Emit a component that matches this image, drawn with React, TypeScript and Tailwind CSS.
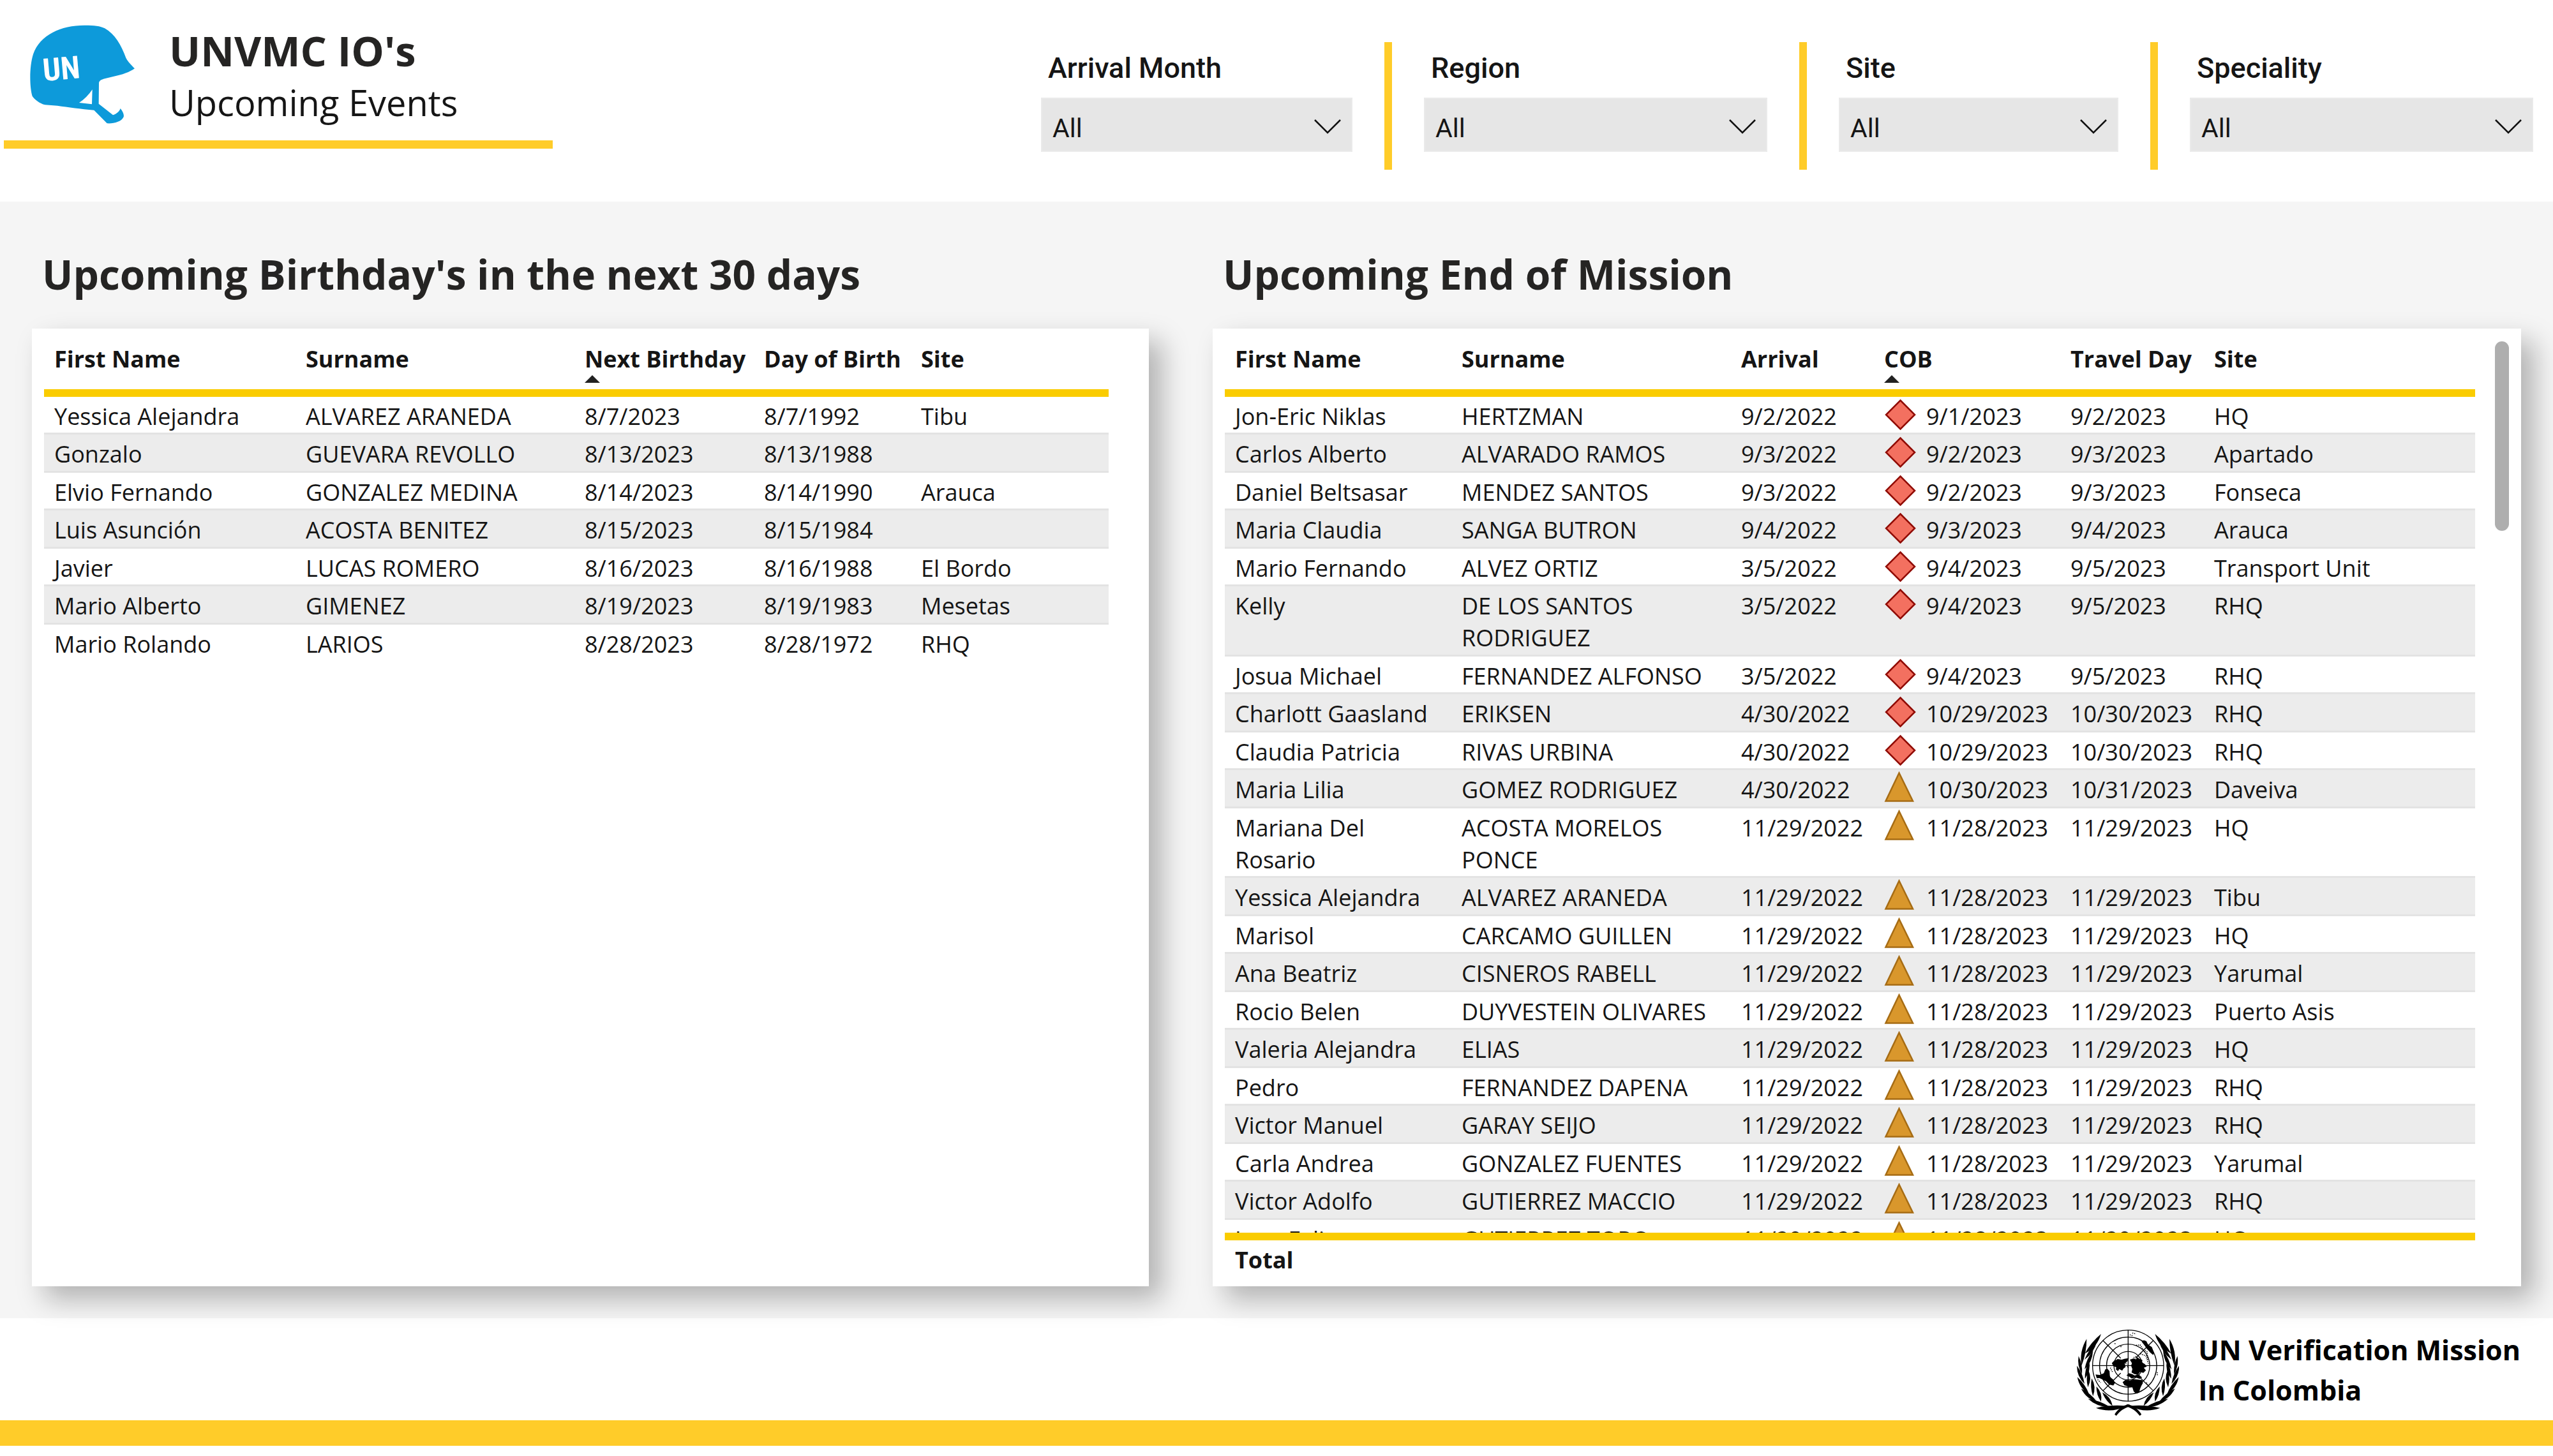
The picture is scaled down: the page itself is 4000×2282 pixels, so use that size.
import { Fragment, ReactNode } from "react";

type Column = {
    label: string;
    width: string;
    sorted?: boolean;
};

type Mission = [string, string, string, string, string, string];

const filters = [
    { id: "arrival-month", label: "Arrival Month" },
    { id: "region", label: "Region" },
    { id: "site", label: "Site" },
    { id: "speciality", label: "Speciality" },
];

const birthdayColumns: Column[] = [
    { label: "First Name", width: "w-[394px]" },
    { label: "Surname", width: "w-[437px]" },
    { label: "Next Birthday", width: "w-[281px]", sorted: true },
    { label: "Day of Birth", width: "w-[246px]" },
    { label: "Site", width: "w-auto" },
];

const birthdays = [
    ["Yessica Alejandra", "ALVAREZ ARANEDA", "8/7/2023", "8/7/1992", "Tibu"],
    ["Gonzalo", "GUEVARA REVOLLO", "8/13/2023", "8/13/1988", ""],
    ["Elvio Fernando", "GONZALEZ MEDINA", "8/14/2023", "8/14/1990", "Arauca"],
    ["Luis Asunción", "ACOSTA BENITEZ", "8/15/2023", "8/15/1984", ""],
    ["Javier", "LUCAS ROMERO", "8/16/2023", "8/16/1988", "El Bordo"],
    ["Mario Alberto", "GIMENEZ", "8/19/2023", "8/19/1983", "Mesetas"],
    ["Mario Rolando", "LARIOS", "8/28/2023", "8/28/1972", "RHQ"],
];

const missionColumns: Column[] = [
    { label: "First Name", width: "w-[355px]" },
    { label: "Surname", width: "w-[438px]" },
    { label: "Arrival", width: "w-[224px]" },
    { label: "COB", width: "w-[292px]", sorted: true },
    { label: "Travel Day", width: "w-[225px]" },
    { label: "Site", width: "w-auto" },
];

const missions: Mission[] = [
    ["Jon-Eric Niklas", "HERTZMAN", "9/2/2022", "9/1/2023", "9/2/2023", "HQ"],
    ["Carlos Alberto", "ALVARADO RAMOS", "9/3/2022", "9/2/2023", "9/3/2023", "Apartado"],
    ["Daniel Beltsasar", "MENDEZ SANTOS", "9/3/2022", "9/2/2023", "9/3/2023", "Fonseca"],
    ["Maria Claudia", "SANGA BUTRON", "9/4/2022", "9/3/2023", "9/4/2023", "Arauca"],
    ["Mario Fernando", "ALVEZ ORTIZ", "3/5/2022", "9/4/2023", "9/5/2023", "Transport Unit"],
    ["Kelly", "DE LOS SANTOS RODRIGUEZ", "3/5/2022", "9/4/2023", "9/5/2023", "RHQ"],
    ["Josua Michael", "FERNANDEZ ALFONSO", "3/5/2022", "9/4/2023", "9/5/2023", "RHQ"],
    ["Charlott Gaasland", "ERIKSEN", "4/30/2022", "10/29/2023", "10/30/2023", "RHQ"],
    ["Claudia Patricia", "RIVAS URBINA", "4/30/2022", "10/29/2023", "10/30/2023", "RHQ"],
    ["Maria Lilia", "GOMEZ RODRIGUEZ", "4/30/2022", "10/30/2023", "10/31/2023", "Daveiva"],
    ["Mariana Del Rosario", "ACOSTA MORELOS PONCE", "11/29/2022", "11/28/2023", "11/29/2023", "HQ"],
    ["Yessica Alejandra", "ALVAREZ ARANEDA", "11/29/2022", "11/28/2023", "11/29/2023", "Tibu"],
    ["Marisol", "CARCAMO GUILLEN", "11/29/2022", "11/28/2023", "11/29/2023", "HQ"],
    ["Ana Beatriz", "CISNEROS RABELL", "11/29/2022", "11/28/2023", "11/29/2023", "Yarumal"],
    ["Rocio Belen", "DUYVESTEIN OLIVARES", "11/29/2022", "11/28/2023", "11/29/2023", "Puerto Asis"],
    ["Valeria Alejandra", "ELIAS", "11/29/2022", "11/28/2023", "11/29/2023", "HQ"],
    ["Pedro", "FERNANDEZ DAPENA", "11/29/2022", "11/28/2023", "11/29/2023", "RHQ"],
    ["Victor Manuel", "GARAY SEIJO", "11/29/2022", "11/28/2023", "11/29/2023", "RHQ"],
    ["Carla Andrea", "GONZALEZ FUENTES", "11/29/2022", "11/28/2023", "11/29/2023", "Yarumal"],
    ["Victor Adolfo", "GUTIERREZ MACCIO", "11/29/2022", "11/28/2023", "11/29/2023", "RHQ"],
    ["Juan Felipe", "GUTIERREZ TORO", "11/29/2022", "11/28/2023", "11/29/2023", "HQ"],
];

// COB dates before this one are shown as urgent
const urgentBefore = new Date("10/30/2023");

/** Blue helmet with chin strap */
function HelmetLogo() {
    return (
        <svg viewBox="48 24 498 468" className="h-[156px] w-[166px] shrink-0" role="img" aria-label="UN helmet">
            <path
                fill="#0d9ada"
                fillRule="evenodd"
                d="M62 362C49 320 47 225 66 165C98 72 200 28 310 29C352 29 382 32 402 43C450 70 480 122 502 182C512 202 530 218 543 232C522 248 484 262 442 270L402 280C386 284 376 290 375 300L374 398L441 451C460 444 471 434 476 420C488 435 494 448 491 460C482 482 445 492 413 490L352 428C290 422 230 414 180 407L122 403C97 397 70 376 62 362ZM344 331L342 400L282 393Q318 370 344 331Z"
            />
            <text
                x="198"
                y="284"
                textAnchor="middle"
                fill="#fff"
                fontSize="148"
                fontWeight="700"
                fontFamily="'Roboto Condensed', 'Open Sans Condensed', Roboto, sans-serif"
                transform="rotate(-5 198 232)"
            >
                UN
            </text>
        </svg>
    );
}

// base x, base y, tip x, tip y, belly
const leaves = [
    [76, 138, 152, 46, 20],
    [60, 196, 84, 70, -18],
    [74, 168, 132, 84, 12],
    [62, 236, 46, 150, -10],
    [74, 214, 114, 124, 14],
    [74, 282, 38, 196, -14],
    [76, 258, 96, 172, 14],
    [96, 332, 40, 250, -16],
    [90, 298, 92, 216, 14],
    [134, 368, 58, 304, -16],
    [114, 340, 108, 256, 14],
    [196, 392, 90, 352, -16],
    [152, 366, 130, 294, 14],
    [270, 386, 128, 396, -26],
    [206, 386, 158, 322, 14],
];

function leafPath([bx, by, tx, ty, belly]: number[]) {
    const dx = tx - bx;
    const dy = ty - by;
    const len = Math.hypot(dx, dy);
    const nx = dy / len;
    const ny = -dx / len;
    const mx = (bx + tx) / 2;
    const my = (by + ty) / 2;
    const a = belly + (belly > 0 ? 6 : -6);
    const b = belly > 0 ? -12 : 12;
    return `M${bx} ${by}Q${mx - nx * a} ${my - ny * a} ${tx} ${ty}Q${mx - nx * b} ${my - ny * b} ${bx} ${by}Z`;
}

function Laurel() {
    return (
        <g>
            {leaves.map((leaf, i) => (
                <path key={i} d={leafPath(leaf)} />
            ))}
            <path d="M286 379C250 382 228 408 216 426L224 433C240 410 262 396 286 389Z" />
        </g>
    );
}

/** UN emblem: polar globe inside olive branches */
function UnEmblem() {
    return (
        <svg viewBox="38 26 482 410" className="h-[136px] w-[160px] shrink-0" role="img" aria-label="United Nations emblem">
            <g fill="none" stroke="#000" strokeWidth="4">
                <circle cx="280" cy="196" r="168" />
                <circle cx="280" cy="196" r="135" />
                <circle cx="280" cy="196" r="102" />
                <circle cx="280" cy="196" r="67" />
                <path d="M280 28V364M112 196H448M161 77L245 161M315 231L399 315M399 77L315 161M245 231L161 315" />
            </g>
            <path d="M126 238L146 240L165 232L172 214L182 211L192 222L194 250L210 262L218 278L210 290L190 285L176 270L160 262L144 254L132 256Z" />
            <path d="M203 184L214 172L222 170L230 165L250 168L262 164L284 160L276 176L264 186L268 202L258 210L252 220L238 212L232 222L222 214L224 204L210 198Z" />
            <path d="M288 168L306 162L318 166L322 156L334 164L348 170L344 180L358 188L368 200L354 206L364 218L352 230L336 226L328 238L310 236L296 228L300 212L294 196L298 184Z" />
            <path d="M272 242L284 232L300 236L310 242L330 238L346 252L334 258L316 252L296 256L286 248Z" />
            <path d="M254 274L266 264L290 266L306 260L328 262L346 264L350 278L342 292L336 306L332 324L318 328L306 318L300 298L282 296L262 288Z" />
            <path d="M343 82L354 76L366 80L374 96L392 108L402 134L398 146L384 134L368 116L356 98Z" />
            <path
                fill="none"
                stroke="#000"
                strokeWidth="5"
                strokeDasharray="4 5"
                d="M300 42L318 46M288 50L304 56M318 100L336 98L352 120L370 132L372 168M338 140L364 150L376 186M306 158L320 152M196 206L206 226M276 200L284 206M268 184L276 190M136 262L150 276M366 276L374 290M418 228V246M246 104V112M216 92H222"
            />
            <Laurel />
            <g transform="matrix(-1 0 0 1 559 0)">
                <Laurel />
            </g>
        </svg>
    );
}

function StatusIcon({ date }: { date: string }) {
    if (new Date(date) < urgentBefore) {
        return (
            <svg viewBox="0 0 50 50" className="-mt-1 size-[50px] shrink-0" aria-hidden="true">
                <path d="M25.500 3.500L48 26L25.500 48.500L3 26Z" fill="#f37060" stroke="#900a00" strokeWidth="2.5" />
            </svg>
        );
    }
    return (
        <svg viewBox="0 0 50 50" className="-mt-1 size-[50px] shrink-0" aria-hidden="true">
            <path d="M23.500 2.500L45 46.500H2.500Z" fill="#d9972c" stroke="#a66c14" strokeWidth="2.5" />
        </svg>
    );
}

function Filter({ id, label }: { id: string; label: string }) {
    return (
        <div className="pt-[11px]">
            <label htmlFor={id} className="block pb-4 pl-[11px] font-[Roboto] text-[45px] leading-[60px] font-medium">
                {label}
            </label>
            <div className="relative">
                <select
                    id={id}
                    className="block h-[85px] w-full appearance-none border-2 border-[#eaeaea] bg-[#e6e6e6] pt-2.5 pl-4 font-[Roboto] text-[41px]"
                >
                    <option>All</option>
                </select>
                <svg
                    viewBox="0 0 42 24"
                    className="pointer-events-none absolute top-[33px] right-[18px] h-6 w-[42px]"
                    fill="none"
                    stroke="#111"
                    strokeWidth="2.5"
                    aria-hidden="true"
                >
                    <path d="M1 2L21 22L41 2" />
                </svg>
            </div>
        </div>
    );
}

function TableHead({ columns }: { columns: Column[] }) {
    return (
        <thead className="sticky top-0 bg-white">
            <tr>
                {columns.map((col) => (
                    <th
                        key={col.label}
                        scope="col"
                        aria-sort={col.sorted ? "ascending" : undefined}
                        className={`${col.width} h-[87px] border-b-12 border-[#facc00] pt-[3px] pl-4 text-left align-top font-bold whitespace-nowrap`}
                    >
                        {col.label}
                        {col.sorted && (
                            <svg viewBox="0 0 24 12" className="h-3 w-6" fill="#222" aria-hidden="true">
                                <path d="M12 0L24 12H0Z" />
                            </svg>
                        )}
                    </th>
                ))}
            </tr>
        </thead>
    );
}

function Row({ children }: { children: ReactNode }) {
    return <tr className="group even:bg-[#ececec]">{children}</tr>;
}

function Cell({ children }: { children: ReactNode }) {
    return (
        <td className="border-b-3 border-[#e3e3e3] pt-1.5 pr-3 pl-4 align-top group-last:border-b-0 group-even:pb-px">
            {children}
        </td>
    );
}

function Panel({ title, children }: { title: string; children: ReactNode }) {
    return (
        <section className="flex min-w-0 flex-col">
            <h2 className="mb-10 pl-4 text-[64px] leading-[90px] font-bold text-[#252423]">{title}</h2>
            <div className="flex grow items-start bg-white pt-5 pb-4 pl-[19px] shadow-[20px_20px_40px_rgba(0,0,0,0.28)]">
                {children}
            </div>
        </section>
    );
}

export default function App() {
    return (
        <div className="bg-white font-['Open_Sans',sans-serif] text-[36px] leading-[50px] text-[#151515]">
            <header className="grid h-[316px] grid-cols-[minmax(0,1631fr)_minmax(0,2338fr)] items-start pr-[31px]">
                <div className="ml-1.5 flex h-[233px] w-[860px] gap-[53px] border-b-[13px] border-[#ffcc29] pt-[38px] pl-10">
                    <HelmetLogo />
                    <div>
                        <h1 className="text-[65px] leading-[82px] font-bold text-[#252423]">UNVMC IO's</h1>
                        <p className="text-[56px] leading-[80px]">Upcoming Events</p>
                    </div>
                </div>

                <div className="grid grid-cols-[488fr_12px_538fr_12px_438fr_12px_538fr] gap-x-[50px] pt-[66px]">
                    {filters.map((filter, i) => (
                        <Fragment key={filter.id}>
                            {i > 0 && <div className="h-[200px] bg-[#ffcc29]" />}
                            <Filter id={filter.id} label={filter.label} />
                        </Fragment>
                    ))}
                </div>
            </header>

            <main className="grid grid-cols-[minmax(0,1750fr)_minmax(0,2050fr)] gap-[100px] bg-[#f5f5f5] px-[50px] pt-[69px] pb-[50px]">
                <Panel title="Upcoming Birthday's in the next 30 days">
                    <table className="mr-[63px] w-full table-fixed border-separate border-spacing-0">
                        <TableHead columns={birthdayColumns} />
                        <tbody>
                            {birthdays.map((row) => (
                                <Row key={row[0]}>
                                    {row.map((value, i) => (
                                        <Cell key={i}>{value}</Cell>
                                    ))}
                                </Row>
                            ))}
                        </tbody>
                    </table>
                </Panel>

                <Panel title="Upcoming End of Mission">
                    <div className="min-w-0 grow">
                        <div className="h-[1397px] overflow-y-auto [scrollbar-width:none]">
                            <table className="w-full table-fixed border-separate border-spacing-0">
                                <TableHead columns={missionColumns} />
                                <tbody>
                                    {missions.map(([first, surname, arrival, cob, travel, site]) => (
                                        <Row key={first + surname}>
                                            <Cell>{first}</Cell>
                                            <Cell>{surname}</Cell>
                                            <Cell>{arrival}</Cell>
                                            <Cell>
                                                <div className="flex gap-4">
                                                    <StatusIcon date={cob} />
                                                    {cob}
                                                </div>
                                            </Cell>
                                            <Cell>{travel}</Cell>
                                            <Cell>{site}</Cell>
                                        </Row>
                                    ))}
                                </tbody>
                            </table>
                        </div>
                        <div className="border-t-12 border-[#facc00] pt-1.5 pl-4 font-bold">Total</div>
                    </div>
                    {/* Scroll thumb */}
                    <div className="mr-[19px] ml-[31px] h-[297px] w-[22px] shrink-0 rounded-full bg-[#aeaeae]" />
                </Panel>
            </main>

            <footer className="pb-4">
                <div className="flex h-[160px] justify-end gap-[30px] pt-[18px] pr-[51px]">
                    <UnEmblem />
                    <p className="text-[43px] leading-[63px] font-bold text-black">
                        UN Verification Mission
                        <br />
                        In Colombia
                    </p>
                </div>
                <div className="h-10 bg-[#ffcc29]" />
            </footer>
        </div>
    );
}
